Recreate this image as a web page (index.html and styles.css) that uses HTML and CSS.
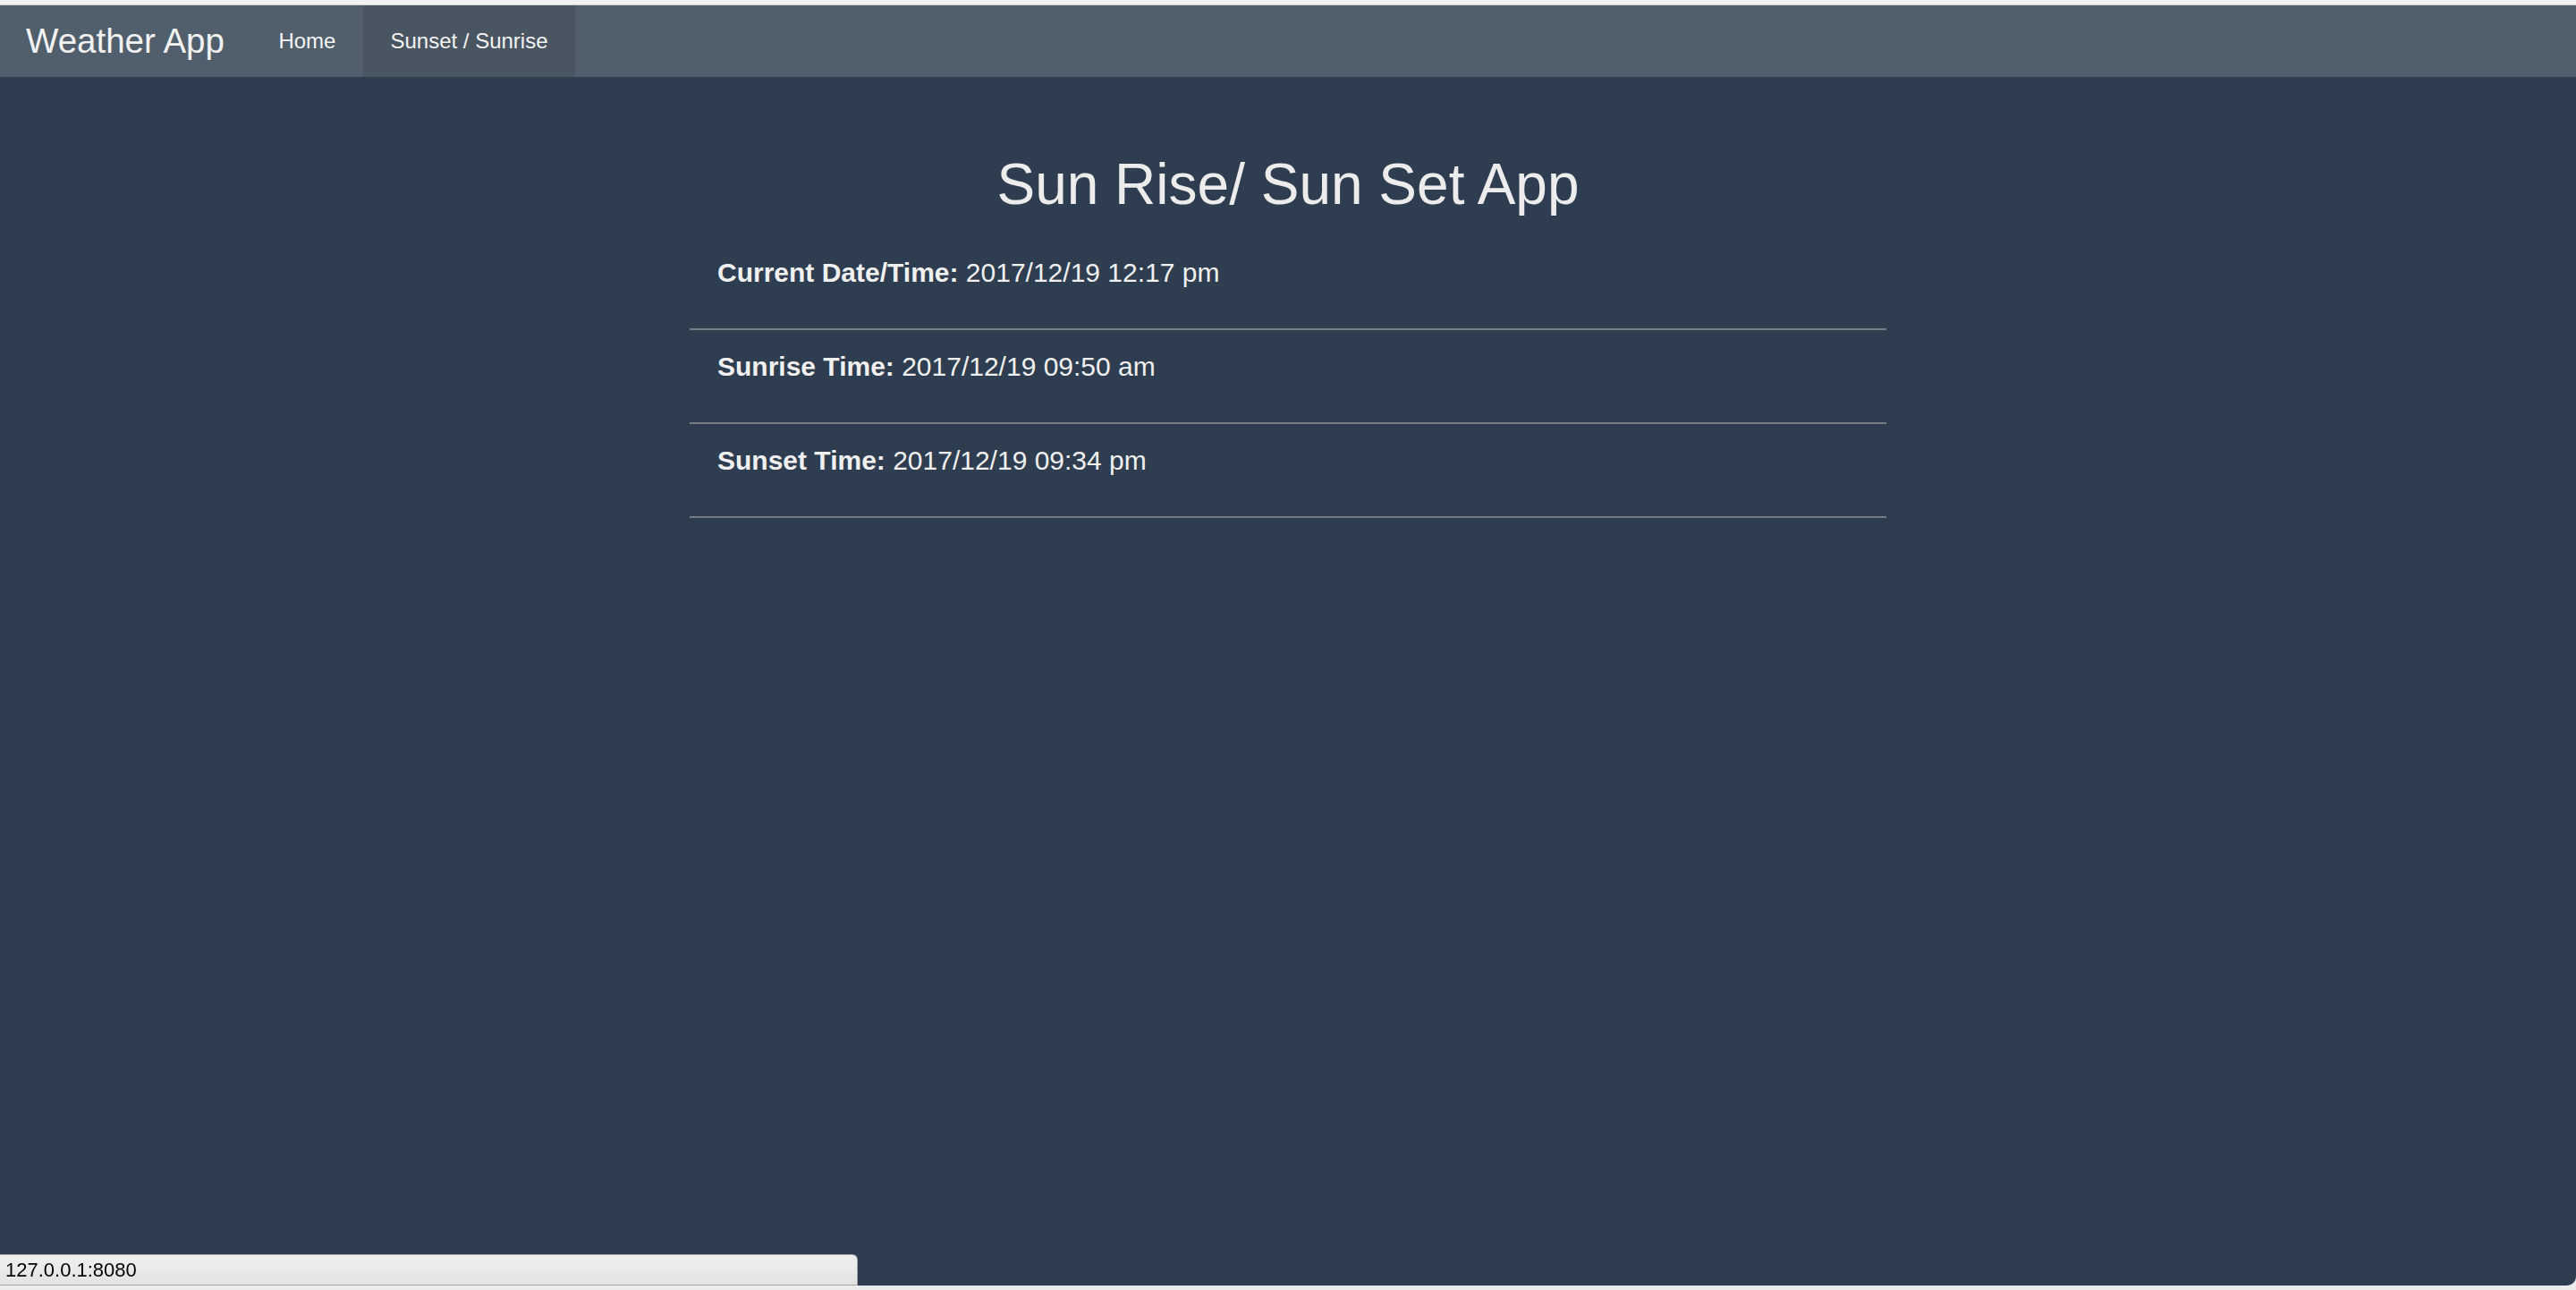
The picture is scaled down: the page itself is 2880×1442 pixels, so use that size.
FILE: index.html
```html
<!DOCTYPE html>
<html lang="en">
<head>
<meta charset="utf-8">
<title>Weather App</title>
<link rel="stylesheet" href="styles.css">
</head>
<body>
<div class="chrome-top"></div>
<div class="window">
  <nav class="navbar">
    <a class="brand" href="#">Weather App</a>
    <a class="nav-item" href="#">Home</a>
    <a class="nav-item active" href="#">Sunset / Sunrise</a>
  </nav>
  <main class="container">
    <h1 class="title">Sun Rise/ Sun Set App</h1>
    <div class="row"><strong>Current Date/Time:</strong> 2017/12/19 12:17 pm</div>
    <div class="row"><strong>Sunrise Time:</strong> 2017/12/19 09:50 am</div>
    <div class="row"><strong>Sunset Time:</strong> 2017/12/19 09:34 pm</div>
  </main>
</div>
<div class="status-bar">127.0.0.1:8080</div>
</body>
</html>
```
FILE: styles.css
```css
html, body {
  margin: 0;
  padding: 0;
}
body {
  background: #ececec;
  font-family: "Liberation Sans", Arial, Helvetica, sans-serif;
  height: 1442px;
  overflow: hidden;
}
.chrome-top {
  height: 5px;
  background: #f1f1f1;
  border-bottom: 1px solid #cfcfcf;
}
.window {
  height: 1431px;
  background: #2e3d4f;
  border-radius: 0 0 10px 10px;
  overflow: hidden;
}
.navbar {
  height: 80px;
  background: #515f6d;
  display: flex;
  align-items: stretch;
}
.brand {
  display: flex;
  align-items: center;
  padding: 0 30px 0 29px;
  font-size: 38.5px;
  color: #f2f2f2;
  text-decoration: none;
}
.nav-item {
  display: flex;
  align-items: center;
  padding: 0 30.5px;
  font-size: 24px;
  color: #f4f4f4;
  text-decoration: none;
}
.nav-item.active {
  background: #4a5562;
}
.container {
  width: 1338px;
  margin: 0 auto;
}
.title {
  margin: 85px 0 23px;
  font-size: 64px;
  line-height: 70px;
  font-weight: normal;
  text-align: center;
  color: #ececec;
}
.row {
  padding: 20px 0 42px 31px;
  font-size: 30px;
  line-height: 41px;
  color: #f0f0f0;
  border-bottom: 2px solid #777c82;
}
.row strong {
  font-weight: bold;
}
.status-bar {
  position: fixed;
  left: 0;
  top: 1402px;
  width: 952px;
  height: 33px;
  padding-left: 6px;
  background: linear-gradient(#f0f0f0, #e2e2e2);
  border: 1px solid #a8a8a8;
  border-left: none;
  border-radius: 0 6px 0 0;
  font-size: 22px;
  line-height: 34px;
  color: #000;
}
```
